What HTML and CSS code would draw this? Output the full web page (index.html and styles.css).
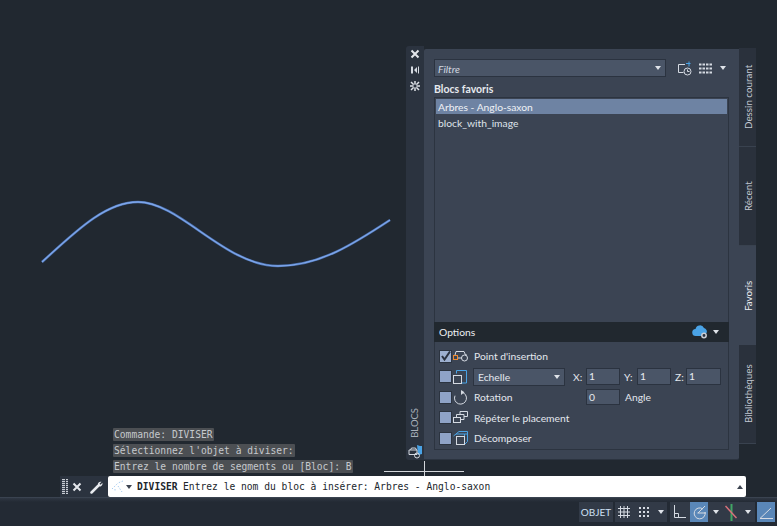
FILE: index.html
```html
<!DOCTYPE html>
<html lang="fr">
<head>
<meta charset="utf-8">
<title>Blocs</title>
<link rel="stylesheet" href="styles.css">
</head>
<body>
<main class="canvas">
  <svg class="curve" width="400" height="100" viewBox="0 0 400 100">
    <path class="curve-glow" d="M2 72C35 42 65 12 98 12C140 12 185 76 238 76C280 76 315 53 350 30"/>
    <path class="curve-line" d="M2 72C35 42 65 12 98 12C140 12 185 76 238 76C280 76 315 53 350 30"/>
  </svg>

  <div class="crosshair"><span class="cross-h"></span><span class="cross-v"></span></div>

  <section class="palette">
    <aside class="titlebar">
      <div class="title-tools">
        <svg class="tool" width="10" height="10" viewBox="0 0 10 10"><path class="ico-w2" d="M1.500 1.500l7 7M8.500 1.500l-7 7"/></svg>
        <svg class="tool" width="10" height="10" viewBox="0 0 10 10"><path class="ico-fill" d="M1 1.500h2v7H1zM4 5l3-3v6zM8 1.500h1v7H8z"/></svg>
        <svg class="tool" width="10" height="10" viewBox="0 0 10 10"><path class="ico-gearline" d="M1 1l8 8M9 1L1 9M5 0v10M0 5h10"/><rect class="ico-hole" x="3.500" y="3.500" width="3" height="3"/></svg>
      </div>
      <div class="title-bottom">
        <span class="title-label">BLOCS</span>
        <svg class="title-icon" width="15" height="14" viewBox="0 0 15 14"><path class="ico-blue" d="M9 0l3 1 2 0v8l-4 1z"/><path class="ico-w" d="M1 5h8v4.500H1zM2.500 5l1-2h4l1 2"/><circle class="ico-w" cx="9" cy="10.500" r="2.500"/></svg>
      </div>
    </aside>

    <div class="panel">
      <div class="toolbar">
        <div class="combo combo-filter"><em>Filtre</em><i class="caret"></i></div>
        <div class="toolbar-icons">
          <svg width="16" height="15" viewBox="0 0 16 15"><path class="ico-w" d="M8 3.500H1.500v8h5"/><path class="ico-blue-line" d="M9 2.500h4.500M12 .5v5"/><circle class="ico-w" cx="10.500" cy="10.500" r="3.500"/><path class="ico-w" d="M10.500 8.500v2h2"/></svg>
          <svg class="gridview" width="14" height="11" viewBox="0 0 14 11"><path class="ico-dash" d="M0 1.500h14M0 5.500h14M0 9.500h14"/></svg>
          <i class="caret"></i>
        </div>
      </div>
      <h2 class="heading">Blocs favoris</h2>
      <ul class="block-list">
        <li class="block selected">Arbres - Anglo-saxon</li>
        <li class="block">block_with_image</li>
      </ul>
      <div class="options">
        <div class="options-head">
          <span>Options</span>
          <div class="options-tools">
            <svg width="16" height="14" viewBox="0 0 16 14"><path class="ico-cloud" d="M4 11a3.500 3.500 0 0 1-.5-7A4.500 4.500 0 0 1 12 3a3.500 3.500 0 0 1 2.500 5H10v3z"/><circle class="ico-gear" cx="12" cy="10.500" r="2.200"/></svg>
            <i class="caret"></i>
          </div>
        </div>
        <div class="options-body">
          <div class="opt-row">
            <span class="check checked"><svg width="10" height="10" viewBox="0 0 10 10"><path class="ico-check" d="M1 5l2.500 3.500L9 .5"/></svg></span>
            <svg class="opt-icon" width="15" height="13" viewBox="0 0 15 13"><path class="ico-w" d="M2 5l1-3.500h8l1.500 3.500"/><path class="ico-w" d="M5 8h4M12.500 5H14"/><rect class="ico-orange" x=".5" y="5.500" width="4" height="4"/><circle class="ico-w" cx="11.500" cy="8" r="3"/></svg>
            <span class="opt-label">Point d'insertion</span>
          </div>
          <div class="opt-row">
            <span class="check"></span>
            <svg class="opt-icon" width="15" height="15" viewBox="0 0 15 15"><path class="ico-blue-line" d="M3.500 1.500h10v12.500H9"/><path class="ico-blue-line" d="M3.500 1.500v3"/><rect class="ico-w" x=".5" y="6.500" width="8" height="8"/></svg>
            <div class="combo combo-scale"><span>Echelle</span><i class="caret"></i></div>
            <span class="axis axis-x">X:</span><span class="field">1</span>
            <span class="axis axis-y">Y:</span><span class="field">1</span>
            <span class="axis axis-z">Z:</span><span class="field">1</span>
          </div>
          <div class="opt-row">
            <span class="check"></span>
            <svg class="opt-icon" width="15" height="15" viewBox="0 0 15 15"><path class="ico-w" d="M8.500 2.200a6 6 0 1 1-6.500 3.500"/><path class="ico-fill" d="M8 0l3.500 2.300L8 5z"/></svg>
            <span class="opt-label opt-rot">Rotation</span>
            <span class="field field-rot">0</span>
            <span class="angle">Angle</span>
          </div>
          <div class="opt-row">
            <span class="check"></span>
            <svg class="opt-icon" width="15" height="13" viewBox="0 0 15 13"><rect class="ico-w" x=".5" y="6.500" width="7" height="5"/><path class="ico-w" d="M3.500 6.500v-3h7.500v5H7.500M7 3.500V.5h7.500v5H11"/></svg>
            <span class="opt-label">Répéter le placement</span>
          </div>
          <div class="opt-row">
            <span class="check"></span>
            <svg class="opt-icon" width="15" height="14" viewBox="0 0 15 14"><path class="ico-blue-line" d="M3 3l3-2.500h8.500v10L12 13M11.500 3h3M11.500 3v3"/><path class="ico-blue-line" d="M.5 5L3 3h8.500"/><rect class="ico-w" x="3.500" y="5.500" width="8" height="8"/></svg>
            <span class="opt-label">Décomposer</span>
          </div>
        </div>
      </div>
    </div>

    <nav class="tabs">
      <span class="tab tab-first">Dessin courant</span>
      <span class="tab">Récent</span>
      <span class="tab active">Favoris</span>
      <span class="tab">Bibliothèques</span>
    </nav>
  </section>

  <div class="history">
    <div><span>Commande: DIVISER</span></div>
    <div><span>Sélectionnez l'objet à diviser:</span></div>
    <div><span>Entrez le nombre de segments ou [Bloc]: B</span></div>
  </div>

  <div class="cmdbar">
    <div class="cmd-handle">
      <span class="grip"></span>
      <svg width="10" height="10" viewBox="0 0 10 10"><path class="ico-w2" d="M1.500 1.500l7 7M8.500 1.500l-7 7"/></svg>
      <svg width="14" height="14" viewBox="0 0 14 14"><path class="ico-wrench" d="M1.500 12.500L8 6"/><path class="ico-wrench-head" d="M8 6a3 3 0 0 1 3.500-4.200L9.500 3.800l1 1 2-2A3 3 0 0 1 8 6z"/></svg>
    </div>
    <div class="cmd-input">
      <svg class="cmd-glyph" width="14" height="13" viewBox="0 0 14 13"><path class="ico-glyph" d="M1 9L7 3M12 1L7 3M7 6l4 6M4 9v3"/></svg>
      <i class="caret caret-dark"></i>
      <b class="cmd-name">DIVISER</b>
      <span class="cmd-text">Entrez le nom du bloc à insérer: Arbres - Anglo-saxon</span>
      <i class="caret-up"></i>
    </div>
  </div>
</main>

<footer class="statusbar">
  <div class="sb-group sb-objet"><span>OBJET</span></div>
  <div class="sb-group sb-grid">
    <svg width="12" height="12" viewBox="0 0 12 12"><path class="ico-w" d="M2.500 0v12M6 0v12M9.500 0v12M0 2.500h12M0 6h12M0 9.500h12"/></svg>
    <svg width="10" height="10" viewBox="0 0 10 10"><path class="ico-dots" d="M0 1h10M0 5h10M0 9h10"/></svg>
    <i class="caret"></i>
  </div>
  <div class="sb-group sb-modes">
    <svg class="sb-ortho" width="13" height="14" viewBox="0 0 13 14"><path class="ico-w" d="M1.500 0v12.500H13M1.500 8.500h4v4"/></svg>
    <span class="sb-active">
      <svg width="15" height="15" viewBox="0 0 15 15"><path class="ico-w" d="M11 4a5.500 5.500 0 1 0 2 3M5.500 8H14M6 8l7-7"/></svg>
    </span>
    <i class="caret"></i>
    <svg class="sb-polar" width="12" height="17" viewBox="0 0 12 17"><path class="ico-green" d="M6.500 0v17"/><path class="ico-red" d="M.5 2l11 12"/></svg>
    <i class="caret"></i>
  </div>
  <span class="sb-active sb-angle">
    <svg width="15" height="13" viewBox="0 0 15 13"><path class="ico-w" d="M1 12.500h13M1 12.500L12 2"/></svg>
  </span>
</footer>
</body>
</html>
```
FILE: styles.css
```css
* { box-sizing: border-box; }
html, body { margin: 0; height: 100%; }
body {
  width: 777px;
  height: 526px;
  overflow: hidden;
  display: flex;
  flex-direction: column;
  background: #212830;
  color: #e3e7ee;
  font: 10.3px/14px "Lato", sans-serif;
}
svg { display: block; fill: none; flex: none; }

.ico-w { stroke: #d5dae2; stroke-width: 1; fill: none; }
.ico-w2 { stroke: #e4e7ec; stroke-width: 2; fill: none; }
.ico-fill { fill: #d5dae2; }
.ico-hole { fill: #2b3340; }
.ico-gearline { stroke: #dfe3e8; stroke-width: 1.500; }
.ico-blue { fill: #4aa3e6; }
.ico-blue-line { stroke: #4aa3e6; stroke-width: 1; fill: none; }
.ico-dash { stroke: #d5dae2; stroke-width: 2; stroke-dasharray: 2.500 1; }
.ico-dots { stroke: #d5dae2; stroke-width: 2; stroke-dasharray: 2 2; }
.ico-cloud { fill: #4aa3e6; }
.ico-gear { fill: #2b3340; stroke: #c9ced6; stroke-width: 1.500; }
.ico-check { stroke: #2a3240; stroke-width: 2; fill: none; }
.ico-orange { stroke: #ef8a2f; stroke-width: 1; fill: none; }
.ico-wrench { stroke: #e8ebef; stroke-width: 2.500; stroke-linecap: round; }
.ico-wrench-head { fill: #e8ebef; }
.ico-glyph { stroke: #a9cdf0; stroke-width: 1; stroke-dasharray: 1.500 1.500; }
.ico-green { stroke: #41a565; stroke-width: 2; }
.ico-red { stroke: #d9717b; stroke-width: 1.500; }

.caret { width: 0; height: 0; border: 3.500px solid transparent; border-top: 4px solid #dfe3e9; border-bottom: 0; flex: none; }
.caret-dark { border-top-color: #3c4350; }
.caret-up { width: 0; height: 0; border: 3.500px solid transparent; border-bottom: 4px solid #3c4350; border-top: 0; margin-left: auto; margin-right: 1px; }

.canvas { position: relative; flex: 1; }
.curve { position: absolute; left: 40px; top: 190px; }
.curve-glow { stroke: #4c72b0; stroke-width: 2.500; fill: none; }
.curve-line { stroke: #7ea6ea; stroke-width: 1.300; fill: none; }

.crosshair { position: absolute; left: 384px; top: 456px; width: 80px; height: 30px; }
.cross-h { position: absolute; left: 0; right: 0; top: 15px; height: 1px; background: #d3d6da; }
.cross-v { position: absolute; left: 40px; top: 5px; bottom: 0; width: 1px; background: #d3d6da; }

/* Palette window */
.palette { position: absolute; left: 406px; top: 46px; height: 414px; width: 350px; display: flex; align-items: flex-start; }
.titlebar {
  width: 18px; height: 414px; background: #2b333f;
  display: flex; flex-direction: column; justify-content: space-between; align-items: center;
  padding: 3px 0 1px;
  border-radius: 3px 0 0 3px;
}
.title-tools { display: flex; flex-direction: column; gap: 6px; }
.title-bottom { display: flex; flex-direction: column; align-items: center; gap: 7px; }
.title-label { writing-mode: vertical-rl; transform: rotate(180deg); color: #a8afba; font-size: 9.500px; line-height: 12px; }
.panel {
  width: 315px; height: 411px; margin-top: 3px;
  background: #3b4453;
  border-bottom: 1px solid #2c3440;
  padding: 10px 10px 9px;
  display: flex; flex-direction: column;
  border-radius: 2px 0 2px 0;
}
.toolbar { display: flex; align-items: center; height: 18px; }
.toolbar-icons { display: flex; align-items: center; margin-left: 11px; }
.gridview { margin-left: 6px; }
.toolbar-icons .caret { margin-left: 7px; }
.combo {
  display: flex; align-items: center; justify-content: space-between;
  background: #4a5567; border: 1px solid #2b3340; padding: 0 4px 0 3px; color: #e3e7ee;
}
.combo-filter { width: 232px; height: 18px; }
.combo-filter em { color: #d3d8e0; padding-top: 1px; }
.heading { margin: 5px 0 0; font-size: 10.5px; line-height: 14px; font-weight: 700; color: #e6e9ee; height: 14px; }
.block-list {
  list-style: none; margin: 1px 0 0; padding: 1px; flex: 1;
  background: #3b4453; border: 1px solid #2c3440; border-bottom: 0;
}
.block { height: 15px; line-height: 15px; padding: 1px 0 0 2px; color: #dfe3ea; margin-bottom: 1px; }
.block.selected { background: #6e83a3; color: #f0f2f6; }

.options { border: 1px solid #2c3440; border-top: 0; height: 128px; display: flex; flex-direction: column; }
.options-head {
  height: 20px; flex: none; background: #21282f; margin: 0 -1px; padding: 0 10px 0 5px;
  display: flex; align-items: center; justify-content: space-between; color: #eceef2;
}
.options-tools { display: flex; align-items: center; gap: 5px; }
.options-body { padding: 4px 0 0 4px; display: flex; flex-direction: column; }
.opt-row { display: flex; align-items: center; height: 20.500px; }
.check { width: 13px; height: 13px; background: #8fa3c7; border: 1px solid #2c3440; flex: none; display: flex; align-items: center; justify-content: center; }
.check.checked { background: #9db0d0; }
.opt-icon { margin-left: 1px; width: 15px; }
.opt-label { margin-left: 6px; color: #e3e7ee; }
.combo-scale { margin-left: 5px; width: 92px; height: 18px; padding-left: 4px; }
.axis { color: #e3e7ee; }
.axis-x { margin-left: 8px; width: 13px; }
.axis-y { margin-left: 4px; width: 13px; }
.axis-z { margin-left: 4px; width: 11px; }
.field { width: 34px; height: 17px; line-height: 15px; background: #4a5567; border: 1px solid #2b3340; padding-left: 2px; color: #e8ebf0; flex: none; }
.axis + .field:last-child { width: 35px; }
.opt-rot { width: 112px; }
.field-rot { height: 16px; }
.angle { margin-left: 5px; }

.tabs { width: 17px; margin-top: 2px; display: flex; flex-direction: column; }
.tab {
  width: 17px; height: 99px; writing-mode: vertical-rl; transform: rotate(180deg);
  background: #2a313c; color: #c2c8d2; text-align: center; line-height: 15px; padding-right: 2px; font-size: 9.800px;
  border-top: 1px solid #39424f;
  flex: none;
}
.tab.active { background: #3b4453; color: #eceef2; border-top: 0; }

/* Command line */
.history { position: absolute; left: 113px; top: 428px; font: 9.630px/13px "DejaVu Sans Mono", monospace; color: #c6c9cd; display: flex; flex-direction: column; gap: 3px; }
.history span { display: inline-block; background: #4c4f53; padding: 0 1px; height: 13px; border-radius: 1px; }

.cmdbar { position: absolute; left: 60px; top: 476px; width: 686px; height: 21px; display: flex; }
.cmd-handle { width: 48px; background: #2b333f; display: flex; align-items: center; padding-left: 2px; gap: 4px; }
.cmd-handle svg:last-child { margin-left: 4px; }
.grip {
  width: 6px; height: 15px; flex: none;
  background:
    linear-gradient(90deg, transparent 2.500px, #2b333f 2.500px 3.500px, transparent 3.500px),
    repeating-linear-gradient(#c7ccd3 0 1px, #4a5260 1px 2px);
}
.cmd-input {
  flex: 1; background: #fff; border-radius: 2px; display: flex; align-items: center; padding: 0 2px 0 3px;
  font: 9.630px/14px "DejaVu Sans Mono", monospace; color: #20252b;
}
.cmd-input .caret { margin-left: 1px; }
.cmd-name { margin-left: 5px; }
.cmd-text { margin-left: 5.500px; }

/* Status bar */
.statusbar {
  height: 29px; flex: none;
  border-top: 1px solid #3a4350;
  background: linear-gradient(#2f3743 0, #232a34 4px);
  display: flex; justify-content: flex-end; align-items: flex-start; gap: 2px;
  padding: 4px 2px 0 0;
  color: #dde6f2;
}
.sb-group { height: 20px; background: #323a47; display: flex; align-items: center; }
.sb-objet { width: 34px; justify-content: center; font: 10px "Lato", sans-serif; color: #cfe0f5; }
.sb-grid { width: 52px; padding-left: 3px; gap: 9px; }
.sb-modes { width: 85px; padding-left: 3px; margin-left: 1px; }
.sb-ortho { margin-right: 4px; }
.sb-active { background: #5a87b8; height: 20px; width: 18px; display: flex; align-items: center; justify-content: center; flex: none; }
.sb-modes .caret { margin-left: 5px; }
.sb-polar { margin-left: 6px; }
.sb-modes .sb-polar + .caret { margin-left: 8px; }
```
